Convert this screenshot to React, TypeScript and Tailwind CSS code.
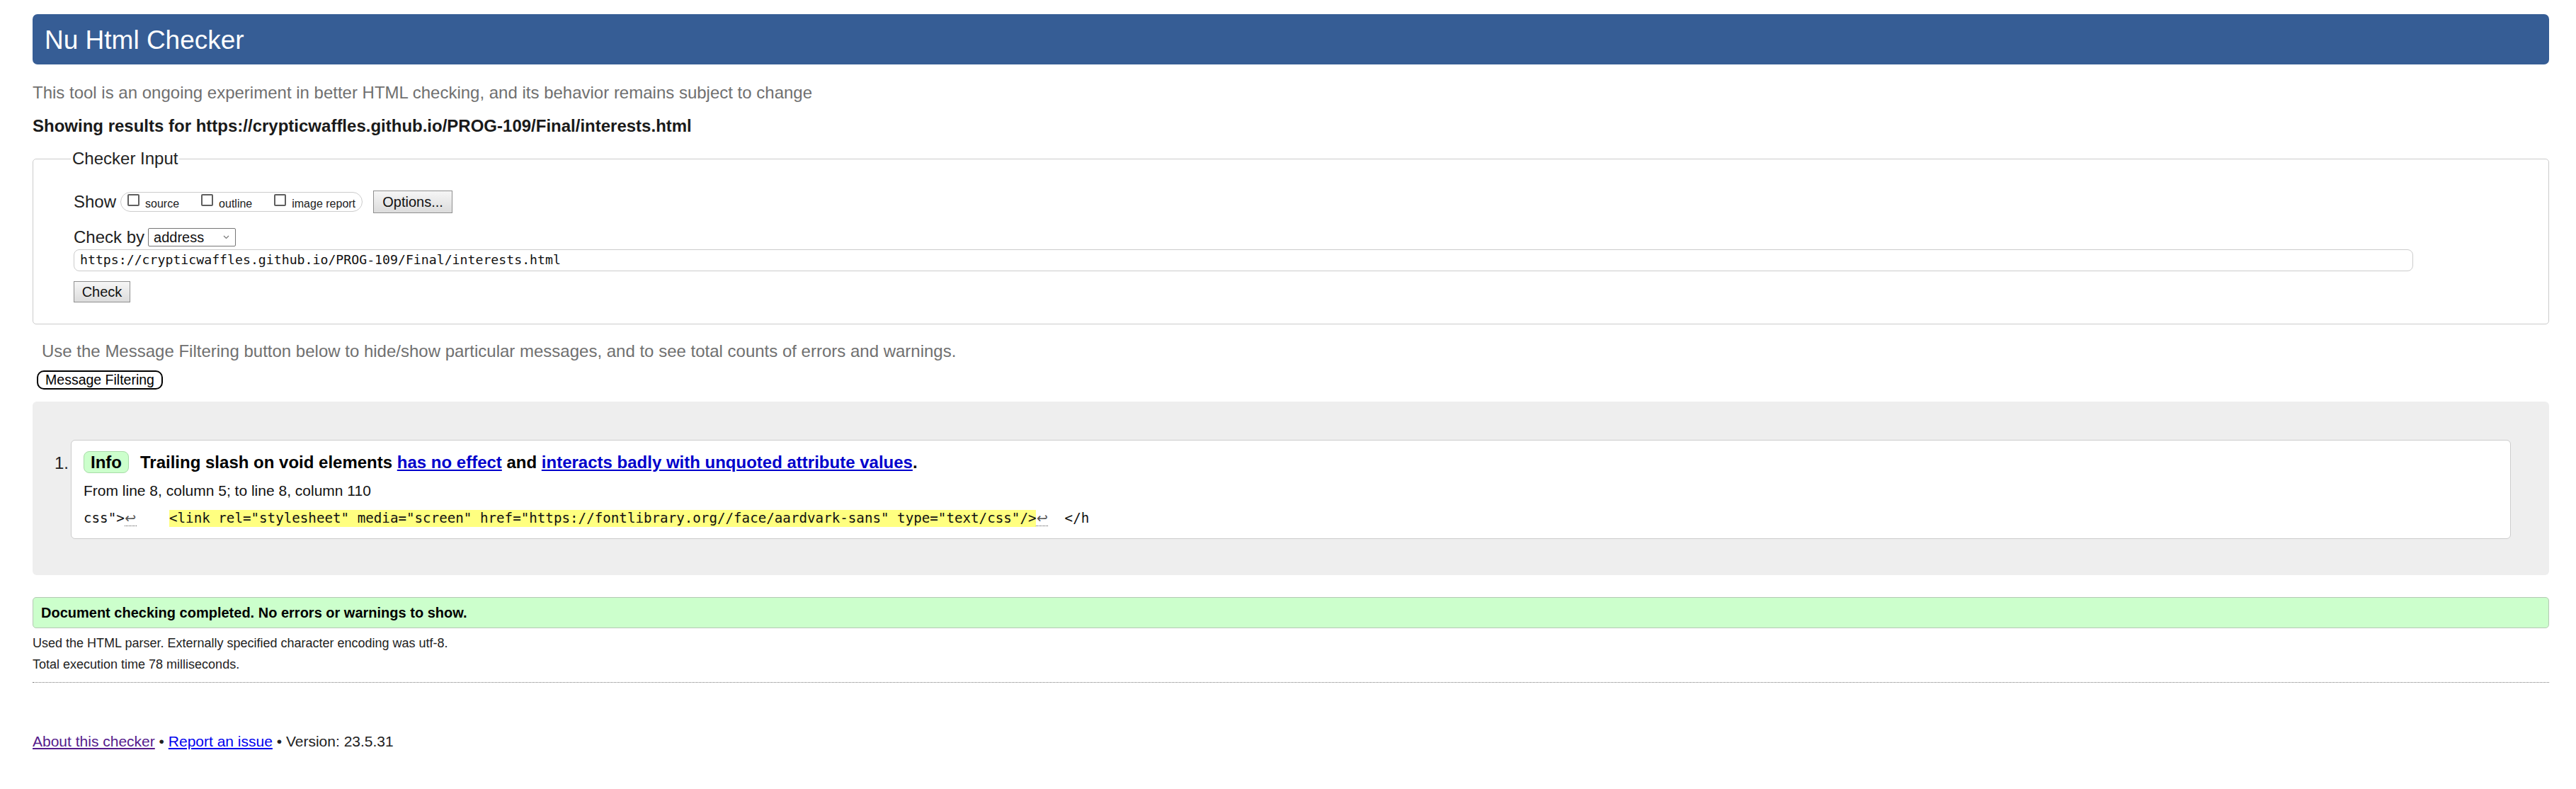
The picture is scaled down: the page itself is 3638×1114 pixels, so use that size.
function Checkbox({ label }: { label: string }) {
  return (
    <span className="flex items-end">
      <span className="mb-[6px] h-[17px] w-[17px] rounded-[2px] border-2 border-[#5f5f5f] bg-white" />
      <span className="ml-[8px] text-[16px] leading-[18px] text-[#222]">{label}</span>
    </span>
  );
}

function GrayButton({ children, className }: { children: React.ReactNode; className: string }) {
  return (
    <button
      type="button"
      className={`flex items-center justify-center border border-[#8f8f8f] bg-gradient-to-b from-[#f6f6f6] to-[#dcdcdc] text-[20px] leading-none text-[#111] ${className}`}
    >
      {children}
    </button>
  );
}

function ReturnMark() {
  return (
    <span className="inline-block w-[17px] border-b border-dotted border-[#555] text-center font-['DejaVu_Sans',sans-serif] text-[19px] leading-[22px] text-[#555]">
      ↩
    </span>
  );
}

export default function App() {
  return (
    <div className="min-h-[1114px] bg-white pl-[46px] pr-[38px] pt-[20px] font-['Liberation_Sans',Arial,sans-serif] text-[#222]">
      <h1 className="flex h-[71px] items-center rounded-[7px] bg-[#365d95] pl-[17px] pt-[2px] text-[37px] leading-none text-white">
        Nu Html Checker
      </h1>

      <p className="mt-[26px] text-[24px] leading-[28px] text-[#707070]">
        This tool is an ongoing experiment in better HTML checking, and its behavior remains subject to change
      </p>
      <p className="mt-[19px] text-[24px] font-bold leading-[28px] text-[#1a1a1a]">
        Showing results for https://crypticwaffles.github.io/PROG-109/Final/interests.html
      </p>

      <fieldset className="mt-[18px] rounded-[5px] border border-[#cccccc] px-[57px] pb-[30px] pt-[31px]">
        <legend className="ml-[-4px] px-[2px] text-[24px] leading-[28px] text-[#222]">Checker Input</legend>

        <div className="flex h-[32px] items-center">
          <span className="text-[24px] leading-[28px]">Show</span>
          <div className="ml-[6px] flex h-[28px] items-center gap-[31px] rounded-full border border-[#cccccc] pl-[9px] pr-[9px]">
            <Checkbox label="source" />
            <Checkbox label="outline" />
            <Checkbox label="image report" />
          </div>
          <GrayButton className="ml-[15px] h-[32px] w-[112px]">Options...</GrayButton>
        </div>

        <div className="mt-[20px] flex h-[28px] items-center">
          <span className="text-[24px] leading-[28px]">Check by</span>
          <div className="ml-[5px] flex h-[26px] w-[124px] items-center justify-between rounded-[2px] border border-[#767676] bg-white pl-[7px] pr-[8px]">
            <span className="text-[20px] leading-none text-[#111]">address</span>
            <svg width="9" height="6" viewBox="0 0 9 6" fill="none" stroke="#777" strokeWidth="1.2">
              <path d="M1 1l3.5 3.5L8 1" />
            </svg>
          </div>
        </div>

        <div className="mt-[3px] flex h-[31px] w-[3304px] items-center rounded-[8px] border border-[#cccccc] bg-white pl-[8px] font-['DejaVu_Sans_Mono','Liberation_Mono',monospace] text-[18.2px] leading-none text-[#111]">
          https://crypticwaffles.github.io/PROG-109/Final/interests.html
        </div>

        <GrayButton className="mt-[14px] h-[30px] w-[80px]">Check</GrayButton>
      </fieldset>

      <p className="mt-[24px] pl-[13px] text-[24px] leading-[28px] text-[#707070]">
        Use the Message Filtering button below to hide/show particular messages, and to see total counts of errors and warnings.
      </p>
      <button
        type="button"
        className="ml-[6px] mt-[13px] flex h-[27px] w-[178px] items-center justify-center rounded-[10px] border-2 border-black bg-white text-[19.5px] leading-none text-black"
      >
        Message Filtering
      </button>

      <div className="mt-[17px] flex rounded-[6px] bg-[#eeeeee] pb-[51px] pl-[31px] pr-[54px] pt-[54px]">
        <span className="mt-[19px] w-[23px] text-[24px] leading-[28px] text-[#222]">1.</span>
        <div className="flex-1 rounded-[6px] border border-[#cccccc] bg-white pb-[16px] pl-[17px] pt-[15px]">
          <div className="flex h-[31px] items-center">
            <span className="flex h-[31px] w-[64px] items-center justify-center rounded-[8px] border border-[#a8dca8] bg-[#ccffcc] text-[24px] font-bold leading-none text-black">
              Info
            </span>
            <span className="ml-[16px] text-[24px] font-bold leading-[28px] text-black">
              Trailing slash on void elements{' '}
              <span className="text-[#0000cc] underline">has no effect</span> and{' '}
              <span className="text-[#0000cc] underline">interacts badly with unquoted attribute values</span>.
            </span>
          </div>
          <p className="mt-[13px] text-[21px] leading-[24px] text-[#111]">From line 8, column 5; to line 8, column 110</p>
          <p className="mt-[15px] whitespace-pre font-['DejaVu_Sans_Mono','Liberation_Mono',monospace] text-[19.2px] leading-[24px] text-[#111]">
            css"&gt;
            <ReturnMark />
            {'    '}
            <span className="inline-block h-[24px] bg-[#ffff80]">
              &lt;link rel="stylesheet" media="screen" href="https://fontlibrary.org//face/aardvark-sans" type="text/css"/&gt;
            </span>
            <ReturnMark />
            {'  </h'}
          </p>
        </div>
      </div>

      <div className="mt-[31px] flex h-[44px] items-center rounded-[5px] border border-[#b5c9b5] bg-[#ccffcc] pl-[11px]">
        <span className="text-[20px] font-bold leading-[24px] text-black">
          Document checking completed. No errors or warnings to show.
        </span>
      </div>

      <p className="mt-[11px] text-[18px] leading-[21px] text-[#222]">
        Used the HTML parser. Externally specified character encoding was utf-8.
      </p>
      <p className="mt-[9px] text-[18px] leading-[21px] text-[#222]">Total execution time 78 milliseconds.</p>

      <hr className="mt-[14px] border-0 border-t border-dotted border-[#777]" />

      <p className="mt-[71px] text-[21px] leading-[24px] text-[#222]">
        <span className="text-[#551a8b] underline">About this checker</span> •{' '}
        <span className="text-[#0000ee] underline">Report an issue</span> • Version: 23.5.31
      </p>
    </div>
  );
}
